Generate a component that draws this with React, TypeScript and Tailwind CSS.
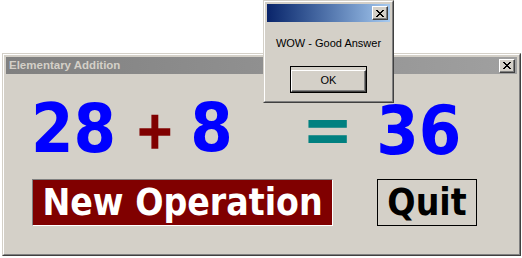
import React from 'react';

const bigFont = { fontFamily: '"DejaVu Sans Condensed", "DejaVu Sans", sans-serif' };

// Classic raised bevel used by title-bar close buttons and dialog buttons
const bevel =
  'border border-t-white border-l-white border-b-[#404040] border-r-[#404040] shadow-[inset_-1px_-1px_0_#808080]';

const CloseBox: React.FC = () => (
  <div className={`w-[16px] h-[14px] bg-[#d4d0c8] flex items-center justify-center ${bevel}`}>
    <svg width="8" height="7" viewBox="0 0 8 7" shapeRendering="crispEdges">
      <path d="M0 0h2v1h-2zM6 0h2v1h-2zM1 1h2v1h-2zM5 1h2v1h-2zM2 2h4v1h-4zM3 3h2v1h-2zM2 4h4v1h-4zM1 5h2v1h-2zM5 5h2v1h-2zM0 6h2v1h-2zM6 6h2v1h-2z" fill="#000" />
    </svg>
  </div>
);

const App: React.FC = () => {
  return (
    <div
      className="relative w-[522px] h-[258px] bg-white overflow-hidden"
      style={{ fontFamily: '"Liberation Sans", Arial, sans-serif' }}
    >
      {/* Main form window */}
      <div className="ml-[2px] mt-[53px] w-[519px] h-[203px] border border-t-[#d4d0c8] border-l-[#d4d0c8] border-b-[#404040] border-r-[#404040]">
        <div className="h-full border border-t-white border-l-white border-b-[#808080] border-r-[#808080] bg-[#d4d0c8] p-[2px] flex flex-col">
          {/* Inactive title bar */}
          <div className="h-[17px] flex items-center justify-between pl-[3px] pr-[2px] bg-gradient-to-r from-[#808080] to-[#a0a0a0]">
            <span className="text-[11.5px] font-bold text-[#d4d0c8] leading-none">Elementary Addition</span>
            <CloseBox />
          </div>

          {/* Sum row */}
          <div className="flex items-start mt-[21px] leading-none font-bold" style={bigFont}>
            <span className="ml-[25px] text-[68px] text-[#0000ff] leading-[68px]">28</span>
            <span className="ml-[19px] mt-[1px] text-[52px] text-[#800000] leading-[68px] [-webkit-text-stroke:1.5px_#800000]">+</span>
            <span className="ml-[16px] -mt-[1px] text-[68px] text-[#0000ff] leading-[68px]">8</span>
            <span className="ml-[69px] mt-[1px] text-[68px] text-[#008080] leading-[68px]">=</span>
            <span className="ml-[23px] mt-[2px] text-[68px] text-[#0000ff] leading-[68px]">36</span>
          </div>

          {/* Buttons row */}
          <div className="flex items-start mt-[14px] font-bold" style={bigFont}>
            <button className="ml-[26px] w-[301px] h-[47px] bg-[#800000] border border-t-[#808080] border-l-[#808080] border-b-white border-r-white text-white text-[37px] leading-none flex items-center justify-center">
              New Operation
            </button>
            <button className="ml-[44px] w-[100px] h-[47px] border border-black text-black text-[37px] leading-none flex items-center justify-center">
              Quit
            </button>
          </div>
        </div>
      </div>

      {/* Message box */}
      <div className="absolute left-[263px] top-0 w-[131px] h-[103px] border border-t-[#d4d0c8] border-l-[#d4d0c8] border-b-[#404040] border-r-[#404040]">
        <div className="h-full border border-t-white border-l-white border-b-[#808080] border-r-[#808080] bg-[#d4d0c8] p-[2px] flex flex-col">
          <div className="h-[18px] flex items-center justify-end pr-[2px] bg-gradient-to-r from-[#0a246a] to-[#a6caf0]">
            <CloseBox />
          </div>
          <div className="mt-[16px] text-center text-[11px] text-black leading-none">WOW - Good Answer</div>
          <div className="mt-[17px] flex justify-center">
            <div className="border border-black">
              <button className={`w-[75px] h-[22px] bg-[#d4d0c8] text-[11px] text-black leading-none ${bevel}`}>
                OK
              </button>
            </div>
          </div>
        </div>
      </div>
    </div>
  );
};

export default App;
